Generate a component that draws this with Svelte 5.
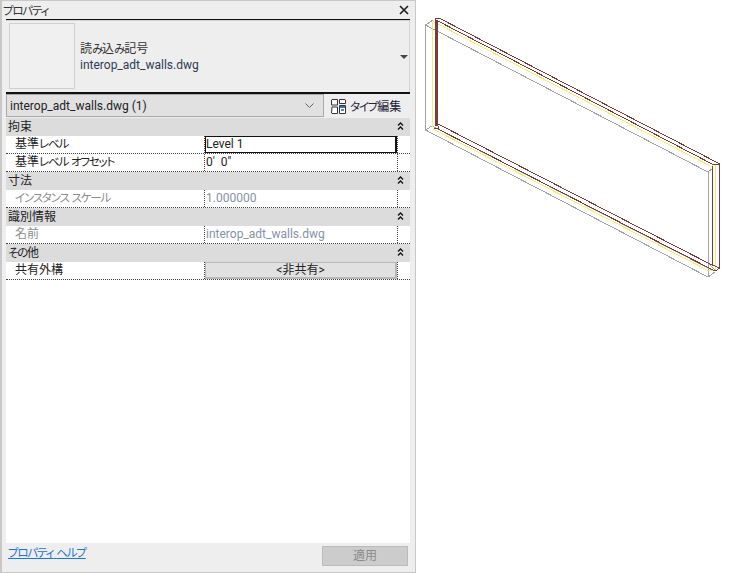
<script>
  const chev = 'M2 4.5 L4.5 2 L7 4.5 M2 8.5 L4.5 6 L7 8.5';
  const sections = [
    { title: '拘束', rows: [
      { label: '基準レベル', value: 'Level 1', kind: 'focus' },
      { label: '基準レベル オフセット', value: "0'  0\"", kind: 'text' }
    ]},
    { title: '寸法', rows: [
      { label: 'インスタンス スケール', value: '1.000000', kind: 'off' }
    ]},
    { title: '識別情報', rows: [
      { label: '名前', value: 'interop_adt_walls.dwg', kind: 'off' }
    ]},
    { title: 'その他', rows: [
      { label: '共有外構', value: '<非共有>', kind: 'button' }
    ]}
  ];
  const runs = (t) => t.split(/([\u3040-\u30ff]+)/).filter(Boolean).map((text) => ({ text, kana: /^[\u3040-\u30ff]+$/.test(text) }));
  const grey = [
    'M425.5 25 L433 20', 'M425.5 25 L425.5 130', 'M425.5 25 L708 172', 'M425.5 130 L432 126',
    'M425.5 130 L708 277', 'M432 126 L712 270', 'M708.5 172 L708.5 277', 'M708 263 L715 270', 'M708 277 L715 272', 'M708 172 L713 168'
  ];
  const yellow = ['M432.5 22 L432.5 127', 'M433 21.4 L713 167.5', 'M433 129 L708 270.4 L715 270.4', 'M715.5 165 L715.5 270'];
  const brown = [
    'M435 18 L439 18 L720 164', 'M435 18 L435 20', 'M436 20 L714 165', 'M438 124 L712 265', 'M436 128 L715 271',
    'M712.5 166 L712.5 266', 'M719.5 164 L719.5 268', 'M712 265 L720 268', 'M715 271 L720 268', 'M714 165 L720 164', 'M438 126 L438 128 L434 128'
  ];
</script>

{#snippet jp(t)}{#each runs(t) as r}<span class:kana={r.kana}>{r.text}</span>{/each}{/snippet}

<div class="panel">
  <header class="title">
    <span>{@render jp('プロパティ')}</span>
    <svg class="close" viewBox="0 0 10 10" aria-hidden="true"><path d="M1 1 L9 9 M9 1 L1 9" /></svg>
  </header>

  <div class="preview">
    <div class="thumb"></div>
    <div class="family">
      <div>{@render jp('読み込み記号')}</div>
      <div>interop_adt_walls.dwg</div>
    </div>
    <svg class="arrow" viewBox="0 0 8 4" aria-hidden="true"><path d="M0 0 H8 L4 4 Z" /></svg>
  </div>

  <div class="selector">
    <div class="combo">
      <span>interop_adt_walls.dwg (1)</span>
      <svg class="caret" viewBox="0 0 9 5" aria-hidden="true"><path d="M0.5 0.5 L4.5 4.5 L8.5 0.5" /></svg>
    </div>
    <div class="edit">
      <svg class="edit-icon" viewBox="0 0 16 16" aria-hidden="true">
        <path class="pane" d="M2 1.5 H7.5 V7 H1.5 V2 Z M2 9 H7.5 V15.5 H2 L1.5 15 Z M9.5 1.5 H15 L15.5 2 V5.5 H9.5 Z M9.5 7.5 H15.5 V15.5 H9.5 Z" />
        <rect x="10" y="8" width="5" height="2" fill="#2f74b5" />
        <rect x="11" y="11" width="3" height="2" fill="#4f87bb" />
      </svg>
      <span>{@render jp('タイプ編集')}</span>
    </div>
  </div>

  <div class="sheet">
    {#each sections as s}
      <div class="section">
        <span>{@render jp(s.title)}</span>
        <svg class="chev" viewBox="0 0 9 10" aria-hidden="true"><path d={chev} /></svg>
      </div>
      {#each s.rows as r}
        <div class="row">
          <div class="label" class:muted={r.kind === 'off'}>{@render jp(r.label)}</div>
          <div class="value">
            {#if r.kind === 'focus'}
              <div class="focus">{r.value}</div>
            {:else if r.kind === 'button'}
              <div class="btn">{r.value}</div>
            {:else}
              <div class="plain" class:off={r.kind === 'off'}>{r.value}</div>
            {/if}
          </div>
          <div class="tail"></div>
        </div>
      {/each}
    {/each}
  </div>

  <footer class="foot">
    <span class="help">{@render jp('プロパティ ヘルプ')}</span>
    <div class="apply">適用</div>
  </footer>
</div>

<svg class="model" viewBox="0 0 732 573" aria-hidden="true">
  {#each grey as d}<path {d} stroke="#a3a3a3" />{/each}
  {#each yellow as d}<path {d} stroke="#f4ee70" />{/each}
  {#each brown as d}<path {d} stroke="#7d3a3a" />{/each}
  <rect x="435" y="20" width="3" height="106" fill="#7d3a3a" />
</svg>

<style>
  :global(body) { margin: 0; background: #fff; }
  .panel {
    box-sizing: border-box;
    width: 416px;
    height: 573px;
    background: #eeeeee;
    border: 1px solid #c8c8c8;
    border-left-width: 2px;
    padding: 0 5px 0 4px;
    display: flex;
    flex-direction: column;
    font: 12px Roboto, "Noto Sans CJK JP", sans-serif;
    font-feature-settings: "palt" 1;
    color: #222;
  }
  .kana { font-size: 11.5px; letter-spacing: -1.2px; }
  .title {
    height: 18px;
    margin-left: -3px;
    margin-right: -1px;
    display: flex;
    align-items: center;
    justify-content: space-between;
    color: #333;
  }
  .close { width: 10px; height: 10px; margin-right: 2px; }
  .close path { stroke: #222; stroke-width: 1.7; fill: none; }
  .preview {
    height: 72px;
    border-top: 1px solid #111;
    border-bottom: 2px solid #111;
    display: flex;
    align-items: center;
    position: relative;
    box-shadow: inset -1px 0 #d4d4d4, inset 0 1px #d4d4d4;
  }
  .thumb {
    box-sizing: border-box;
    width: 66px;
    height: 66px;
    margin-left: 3px;
    border: 1px solid #cfcfcf;
    background: #f0f0f0;
  }
  .family { margin-left: 5px; padding-top: 2px; line-height: 16px; color: #2f3a55; }
  .family div:first-child { color: #333; }
  .arrow { position: absolute; right: 2px; top: 35px; width: 8px; height: 4px; }
  .arrow path { fill: #444; }
  .selector { display: flex; height: 24px; }
  .combo {
    box-sizing: border-box;
    width: 318px;
    height: 23px;
    background: #e1e1e1;
    border: 1px solid #a9a9a9;
    padding: 0 9px 0 3px;
    display: flex;
    align-items: center;
    justify-content: space-between;
  }
  .caret { width: 9px; height: 5px; }
  .caret path { stroke: #666; fill: none; }
  .edit { display: flex; align-items: center; gap: 4px; margin-left: 6px; height: 23px; color: #223; }
  .edit-icon { width: 16px; height: 16px; }
  .pane { stroke: #333; fill: #fff; stroke-width: 1; }
  .sheet { flex: 1; background: #fff; display: flex; flex-direction: column; }
  .section {
    box-sizing: border-box;
    height: 18px;
    padding: 0 5px 3px 2px;
    background: #dcdcdc;
    display: flex;
    align-items: center;
    justify-content: space-between;
    color: #222;
  }
  .chev { width: 9px; height: 10px; }
  .chev path { stroke: #111; fill: none; stroke-width: 1.3; }
  .row {
    box-sizing: border-box;
    height: 18px;
    display: grid;
    grid-template-columns: 198px 193px 13px;
    border-bottom: 1px dotted #444;
  }
  .label { padding-left: 9px; line-height: 17px; color: #222; }
  .label.muted { color: #8c8c8c; }
  .value { border-left: 1px dotted #444; display: flex; white-space: pre; }
  .tail { border-left: 1px dotted #444; }
  .plain { padding-left: 1px; line-height: 17px; }
  .plain.off { color: #8791a8; }
  .focus {
    box-sizing: border-box;
    flex: 1;
    height: 17px;
    border: 1px solid #111;
    border-right-width: 2px;
    padding-left: 0;
    line-height: 15px;
  }
  .btn {
    box-sizing: border-box;
    flex: 1;
    height: 17px;
    background: #e1e1e1;
    border: 1px solid #b8b8b8;
    border-width: 1px 2px 2px 1px;
    text-align: center;
    line-height: 15px;
  }
  .foot {
    height: 29px;
    display: flex;
    justify-content: space-between;
    align-items: flex-start;
    padding: 2px 2px 0 2px;
    box-sizing: border-box;
  }
  .help { color: #1d74d8; text-decoration: underline; line-height: 17px; }
  .apply {
    box-sizing: border-box;
    width: 86px;
    height: 20px;
    margin-top: 1px;
    background: #cccccc;
    border: 1px solid #bbbbbb;
    color: #8a8a8a;
    text-align: center;
    line-height: 18px;
  }
  .model { position: absolute; left: 0; top: 0; width: 732px; height: 573px; pointer-events: none; }
  .model path { fill: none; stroke-width: 1; shape-rendering: crispEdges; }
</style>
